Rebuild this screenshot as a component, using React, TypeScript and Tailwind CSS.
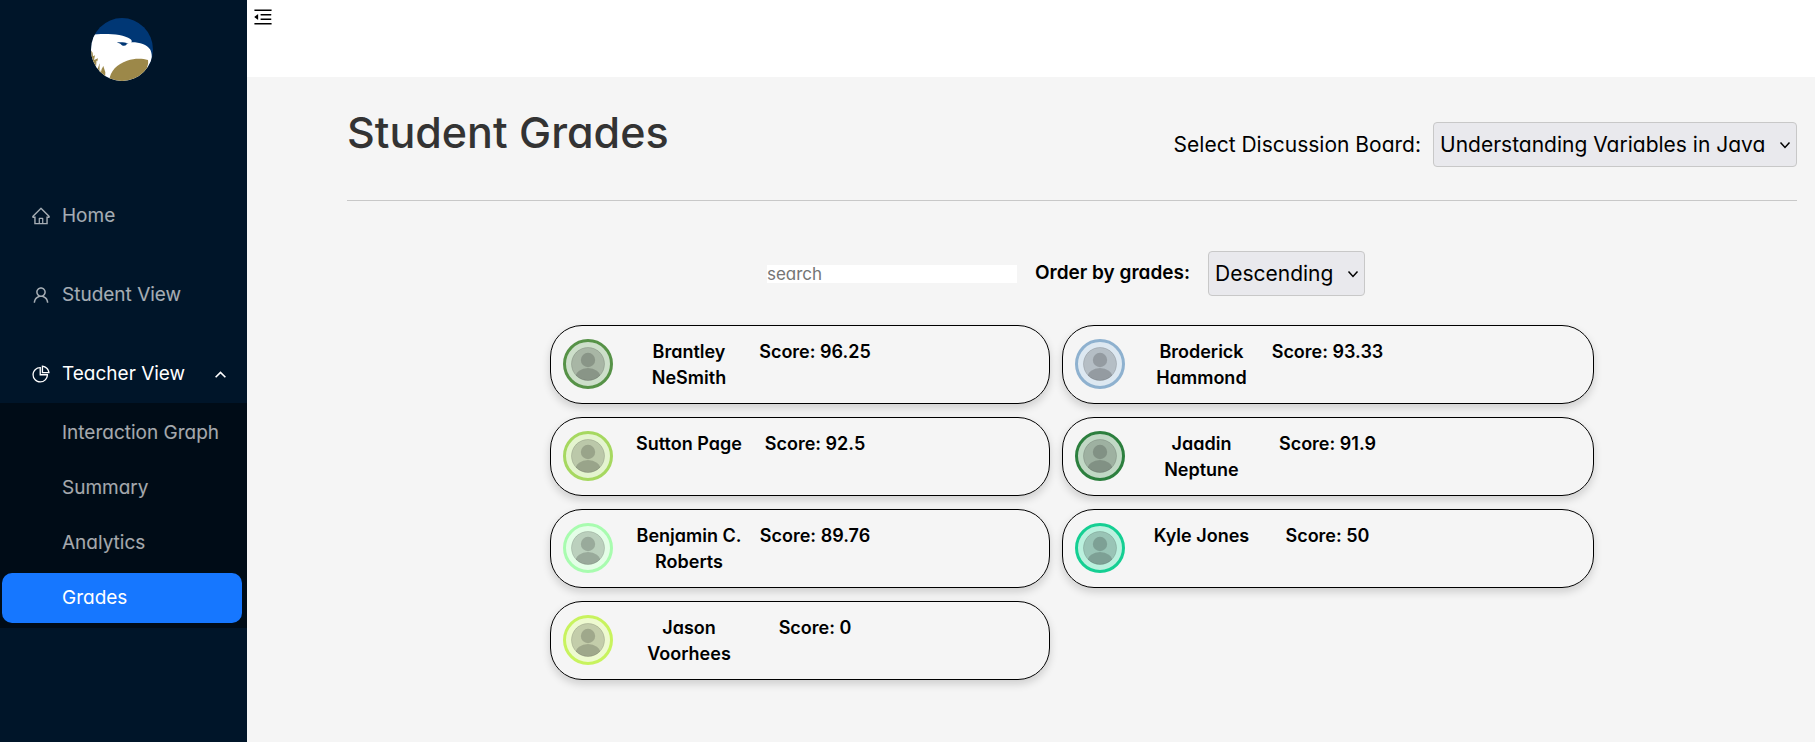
import { useState } from "react";
import type { ReactNode } from "react";
import {
  AiOutlineHome,
  AiOutlineMenuFold,
  AiOutlinePieChart,
  AiOutlineUser,
} from "react-icons/ai";

type Student = { name: string; score: number; ring: string; tint: string };

const students: Student[] = [
  { name: "Brantley NeSmith", score: 96.25, ring: "#569247", tint: "#cddfca" },
  { name: "Broderick Hammond", score: 93.33, ring: "#8eb1cf", tint: "#dde8f1" },
  { name: "Sutton Page", score: 92.5, ring: "#a6d860", tint: "#e4f4cf" },
  { name: "Jaadin Neptune", score: 91.9, ring: "#2c7f3e", tint: "#c1d8c5" },
  { name: "Benjamin C. Roberts", score: 89.76, ring: "#a8fcaf", tint: "#e4fee7" },
  { name: "Kyle Jones", score: 50, ring: "#15cf93", tint: "#bbf0de" },
  { name: "Jason Voorhees", score: 0, ring: "#c8f35e", tint: "#eefad0" },
];

function Logo() {
  return (
    <svg viewBox="0 0 186 189" className="h-[63px] w-[62px]" role="img" aria-label="Eagle logo">
      <defs>
        <clipPath id="logo-disc">
          <ellipse cx="93" cy="94.500" rx="93" ry="94.500" />
        </clipPath>
      </defs>
      <g clipPath="url(#logo-disc)">
        <rect width="186" height="189" fill="#003775" />
        <path
          d="M0 50C40 46 96 47 118 63C123 67 124 71 120 73C143 72 168 80 177 94C184 106 184 126 178 138L150 189H0Z"
          fill="#fff"
        />
        <path d="M77 73C91 72 103 73 113 76L106 77L107 80C100 86 92 83 88 77Z" fill="#003775" />
        <path
          d="M54 189C58 158 78 138 108 128C132 120 154 121 171 126C172 134 172 140 168 146L186 150V189Z"
          fill="#9c8849"
        />
        <path
          d="M0 98L5 104L6 115L12 112L9 126L21 121L15 148L20 152L26 136L27 160L37 144L43 163L42 189H0Z"
          fill="#9c8849"
        />
        <path d="M15 128L14 150L19 154L24 130ZM26 140L24 165L31 160L35 146Z" fill="#fff" fillOpacity="0.6" />
      </g>
    </svg>
  );
}

function Avatar({ ring, tint, id }: { ring: string; tint: string; id: string }) {
  return (
    <svg viewBox="0 0 50 50" className="size-[50px]" aria-hidden="true">
      <defs>
        <clipPath id={id}>
          <circle cx="25" cy="25" r="16.500" />
        </clipPath>
      </defs>
      <circle cx="25" cy="25" r="23.500" fill={tint} stroke={ring} strokeWidth="3" />
      <circle cx="25" cy="25" r="16.500" fill="#000" fillOpacity="0.18" stroke="#000" strokeOpacity="0.14" />
      <g clipPath={`url(#${id})`} fill="#000" fillOpacity="0.18">
        <circle cx="25" cy="21" r="7.200" />
        <ellipse cx="25" cy="38.500" rx="12.500" ry="9.500" />
      </g>
    </svg>
  );
}

function Chevron({ className, up }: { className: string; up?: boolean }) {
  return (
    <svg viewBox="0 0 12 12" className={className} fill="none" stroke="currentColor" strokeWidth="1.5" aria-hidden="true">
      <path d={up ? "M1.500 8.500L6 4L10.500 8.500" : "M1.500 3.500L6 8.500L10.500 3.500"} />
    </svg>
  );
}

function Select({ id, options }: { id: string; options: string[] }) {
  return (
    <div className="relative">
      <select
        id={id}
        className="h-[45px] w-full appearance-none rounded-[4px] border border-[#c8c8c8] bg-[#e9e9ed] pr-[30px] pl-[6px] text-[21px] text-black"
      >
        {options.map((option) => (
          <option key={option}>{option}</option>
        ))}
      </select>
      <Chevron className="pointer-events-none absolute top-[17px] right-[6px] size-3 text-black" />
    </div>
  );
}

function NavLink({ icon, children }: { icon: ReactNode; children: ReactNode }) {
  return (
    <a href="#" className="flex h-[50px] items-center gap-[11px] pr-5 pl-[31px] text-white/65">
      {icon}
      {children}
    </a>
  );
}

function Sidebar() {
  return (
    <aside className="flex w-[247px] shrink-0 flex-col bg-[#001529] text-[19px]">
      <div className="flex justify-center pt-[18px] pr-[3px]">
        <Logo />
      </div>
      <nav className="mt-[110px] flex flex-col">
        <div className="flex flex-col gap-[29px]">
          <NavLink icon={<AiOutlineHome className="size-5" />}>Home</NavLink>
          <NavLink icon={<AiOutlineUser className="size-5" />}>Student View</NavLink>
          <button type="button" className="flex h-[50px] items-center gap-[11px] pr-5 pl-[31px] text-white" aria-expanded="true">
            <AiOutlinePieChart className="size-5" />
            Teacher View
            <Chevron up className="ml-auto size-[13px]" />
          </button>
        </div>
        <ul className="mt-1 flex flex-col gap-[5px] bg-[#000c17] py-[5px] pr-[5px] pl-[2px]">
          {["Interaction Graph", "Summary", "Analytics"].map((label) => (
            <li key={label}>
              <a href="#" className="flex h-[50px] items-center rounded-[10px] pl-[60px] text-white/65">
                {label}
              </a>
            </li>
          ))}
          <li>
            <a href="#" aria-current="page" className="flex h-[50px] items-center rounded-[10px] bg-[#1677ff] pl-[60px] text-white">
              Grades
            </a>
          </li>
        </ul>
      </nav>
    </aside>
  );
}

export default function App() {
  const [query, setQuery] = useState("");
  const shown = students.filter((s) => s.name.toLowerCase().includes(query.toLowerCase()));

  return (
    <div className="flex min-h-screen bg-[#f5f5f5] font-[Inter,sans-serif] text-black [font-feature-settings:'cv11']">
      <Sidebar />
      <div className="flex min-w-0 grow flex-col">
        <header className="h-[77px] bg-white pt-[6px] pl-[5px]">
          <button type="button" aria-label="Collapse menu" className="block">
            <AiOutlineMenuFold className="size-[22px]" />
          </button>
        </header>
        <main className="pr-[18px] pl-[100px]">
          <div className="flex items-start justify-between border-b border-[#c8c8c8] pt-[22px] pb-[33px]">
            <h1 className="text-[43px] leading-[66px] font-medium text-[#333]">Student Grades</h1>
            <div className="flex items-center gap-3 pt-[23px] text-[21px]">
              <label htmlFor="board">Select Discussion Board:</label>
              <Select id="board" options={["Understanding Variables in Java"]} />
            </div>
          </div>
          <div className="mt-[50px] flex items-center justify-center pr-3">
            <input
              type="search"
              aria-label="Search students"
              placeholder="search"
              value={query}
              onChange={(event) => setQuery(event.target.value)}
              className="h-[18px] w-[250px] bg-white text-[17px] leading-[18px] outline-none placeholder:text-[#757575]"
            />
            <label htmlFor="order" className="mr-[18px] ml-[18px] text-[19px] font-semibold">
              Order by grades:
            </label>
            <Select id="order" options={["Descending", "Ascending"]} />
          </div>
          <ul className="mx-auto mt-[29px] grid w-[72%] grid-cols-[500fr_531fr] gap-x-3 gap-y-[13px]">
            {shown.map((student, index) => (
              <li
                key={student.name}
                className="grid h-[79px] grid-cols-[63px_126px_126px] rounded-[32px] border border-black pt-[13px] pl-3 text-center text-[18px] leading-[26px] font-semibold shadow-[0_4px_8px_rgba(0,0,0,0.16)]"
              >
                <Avatar id={`avatar-${index}`} ring={student.ring} tint={student.tint} />
                <span className="px-1">{student.name}</span>
                <span>Score: {student.score}</span>
              </li>
            ))}
          </ul>
        </main>
      </div>
    </div>
  );
}
